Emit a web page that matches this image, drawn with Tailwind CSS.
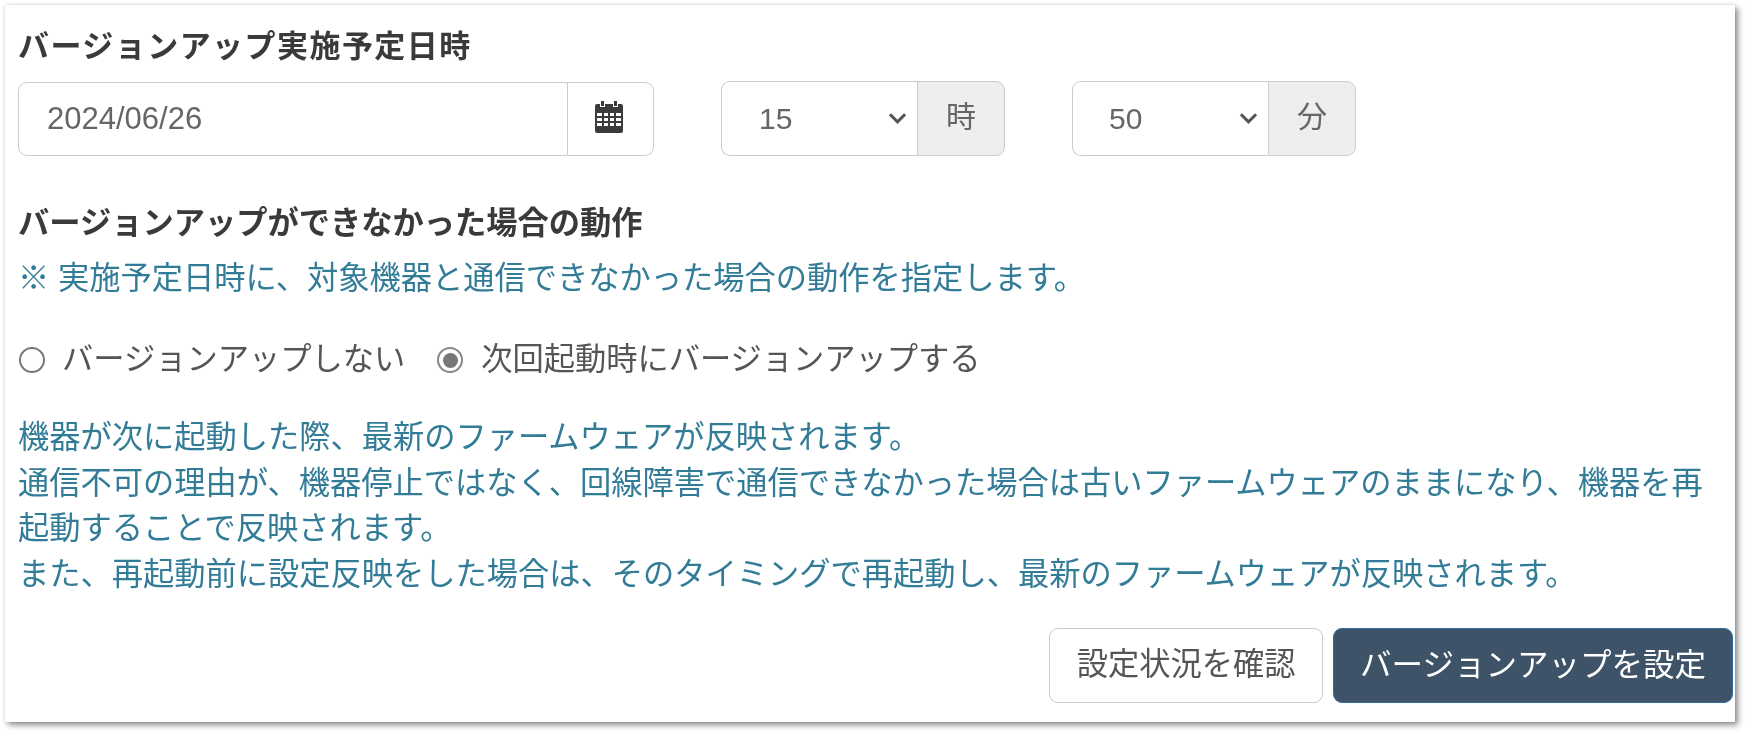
<!DOCTYPE html>
<html lang="ja">
<head>
  <meta charset="UTF-8">
  <title>バージョンアップ設定</title>
  <script src="https://cdn.jsdelivr.net/npm/@tailwindcss/browser@4"></script>
</head>
<body class="bg-white w-[1760px] h-[736px] overflow-hidden font-['Liberation_Sans','Noto_Sans_CJK_JP',sans-serif] text-[#555]">
  <div class="ml-[5px] mt-[5px] w-[1730px] h-[717px] bg-white pl-[13px] pr-[2px] pt-[24px] blur-[0.5px] shadow-[3px_3px_6px_rgba(0,0,0,0.45),0_0_3px_rgba(0,0,0,0.12)]">
    <h2 class="text-[31px] leading-[36px] font-bold text-[#3a3a3a] tracking-[1.45px]">バージョンアップ実施予定日時</h2>

    <!-- date and time -->
    <div class="flex items-end mt-[16px] h-[75px]">
      <div class="flex w-[636px] h-[74px] text-[#666]">
        <input type="text" value="2024/06/26" class="w-[550px] h-full border border-[#ccc] rounded-l-[9px] px-[28px] text-[31px] text-[#666] bg-white outline-none">
        <button class="flex-1 flex items-center justify-center border border-l-0 border-[#ccc] rounded-r-[9px] bg-white pr-[3px] pb-[4px]">
          <svg viewBox="0 0 28 32" class="w-[28px] h-[32px]" fill="#3b3b3b">
            <path d="M6 0h3v5H6zM19 0h3v5h-3z"/>
            <path fill-rule="evenodd" d="M2 3h3v3h5V3h8v3h5V3h3a2 2 0 0 1 2 2v25a2 2 0 0 1-2 2H2a2 2 0 0 1-2-2V5a2 2 0 0 1 2-2zM2 12v3h5v-3zm7 0v3h4v-3zm6 0v3h4v-3zm6 0v3h5v-3zM2 17v3h5v-3zm7 0v3h4v-3zm6 0v3h4v-3zm6 0v3h5v-3zM2 22v3h5v-3zm7 0v3h4v-3zm6 0v3h4v-3zm6 0v3h5v-3z"/>
          </svg>
        </button>
      </div>

      <div class="flex ml-[67px] w-[284px] h-[75px]">
        <div class="relative w-[196px] h-full">
          <select class="appearance-none w-full h-full border border-[#ccc] border-r-0 rounded-l-[9px] pl-[37px] text-[30px] text-[#666] bg-white outline-none">
            <option>15</option>
          </select>
          <svg viewBox="0 0 20 12" class="absolute right-[10px] top-[31px] w-[19px] h-[12px]" fill="none" stroke="#555" stroke-width="3.2"><path d="M2 2l8 8 8-8"/></svg>
        </div>
        <span class="flex-1 flex items-center justify-center border border-[#ccc] rounded-r-[9px] bg-[#eee] text-[30px] text-[#666] pb-[4px]">時</span>
      </div>

      <div class="flex ml-[67px] w-[284px] h-[75px]">
        <div class="relative w-[196px] h-full">
          <select class="appearance-none w-full h-full border border-[#ccc] border-r-0 rounded-l-[9px] pl-[36px] text-[30px] text-[#666] bg-white outline-none">
            <option>50</option>
          </select>
          <svg viewBox="0 0 20 12" class="absolute right-[10px] top-[31px] w-[19px] h-[12px]" fill="none" stroke="#555" stroke-width="3.2"><path d="M2 2l8 8 8-8"/></svg>
        </div>
        <span class="flex-1 flex items-center justify-center border border-[#ccc] rounded-r-[9px] bg-[#eee] text-[30px] text-[#666] pb-[4px]">分</span>
      </div>
    </div>

    <h2 class="mt-[50px] text-[31.25px] leading-[36px] font-bold text-[#3a3a3a]">バージョンアップができなかった場合の動作</h2>
    <p class="mt-[19px] text-[31.25px] leading-[36px] text-[#337c98]">※ 実施予定日時に、対象機器と通信できなかった場合の動作を指定します。</p>

    <!-- radios -->
    <div class="flex items-center mt-[45px] h-[36px] text-[31.25px] text-[#555]">
      <span class="ml-[1px] w-[26px] h-[26px] rounded-full border-2 border-[#777] bg-white"></span>
      <span class="ml-[17px]">バージョンアップしない</span>
      <span class="ml-[32px] w-[26px] h-[26px] rounded-full border-2 border-[#888] flex items-center justify-center"><span class="w-[15px] h-[15px] rounded-full bg-[#777]"></span></span>
      <span class="ml-[18px]">次回起動時にバージョンアップする</span>
    </div>

    <p class="mt-[37px] text-[31.25px] leading-[45.7px] text-[#337c98]">機器が次に起動した際、最新のファームウェアが反映されます。<br>通信不可の理由が、機器停止ではなく、回線障害で通信できなかった場合は古いファームウェアのままになり、機器を再<br>起動することで反映されます。<br>また、再起動前に設定反映をした場合は、そのタイミングで再起動し、最新のファームウェアが反映されます。</p>

    <div class="flex justify-end gap-[10px] mt-[30px]">
      <button class="w-[274px] h-[75px] border border-[#ccc] rounded-[9px] bg-white text-[31.25px] text-[#555]">設定状況を確認</button>
      <button class="w-[400px] h-[75px] border border-[#2f6f9f] rounded-[9px] bg-[#3e5368] text-[31.5px] text-white">バージョンアップを設定</button>
    </div>
  </div>
</body>
</html>
